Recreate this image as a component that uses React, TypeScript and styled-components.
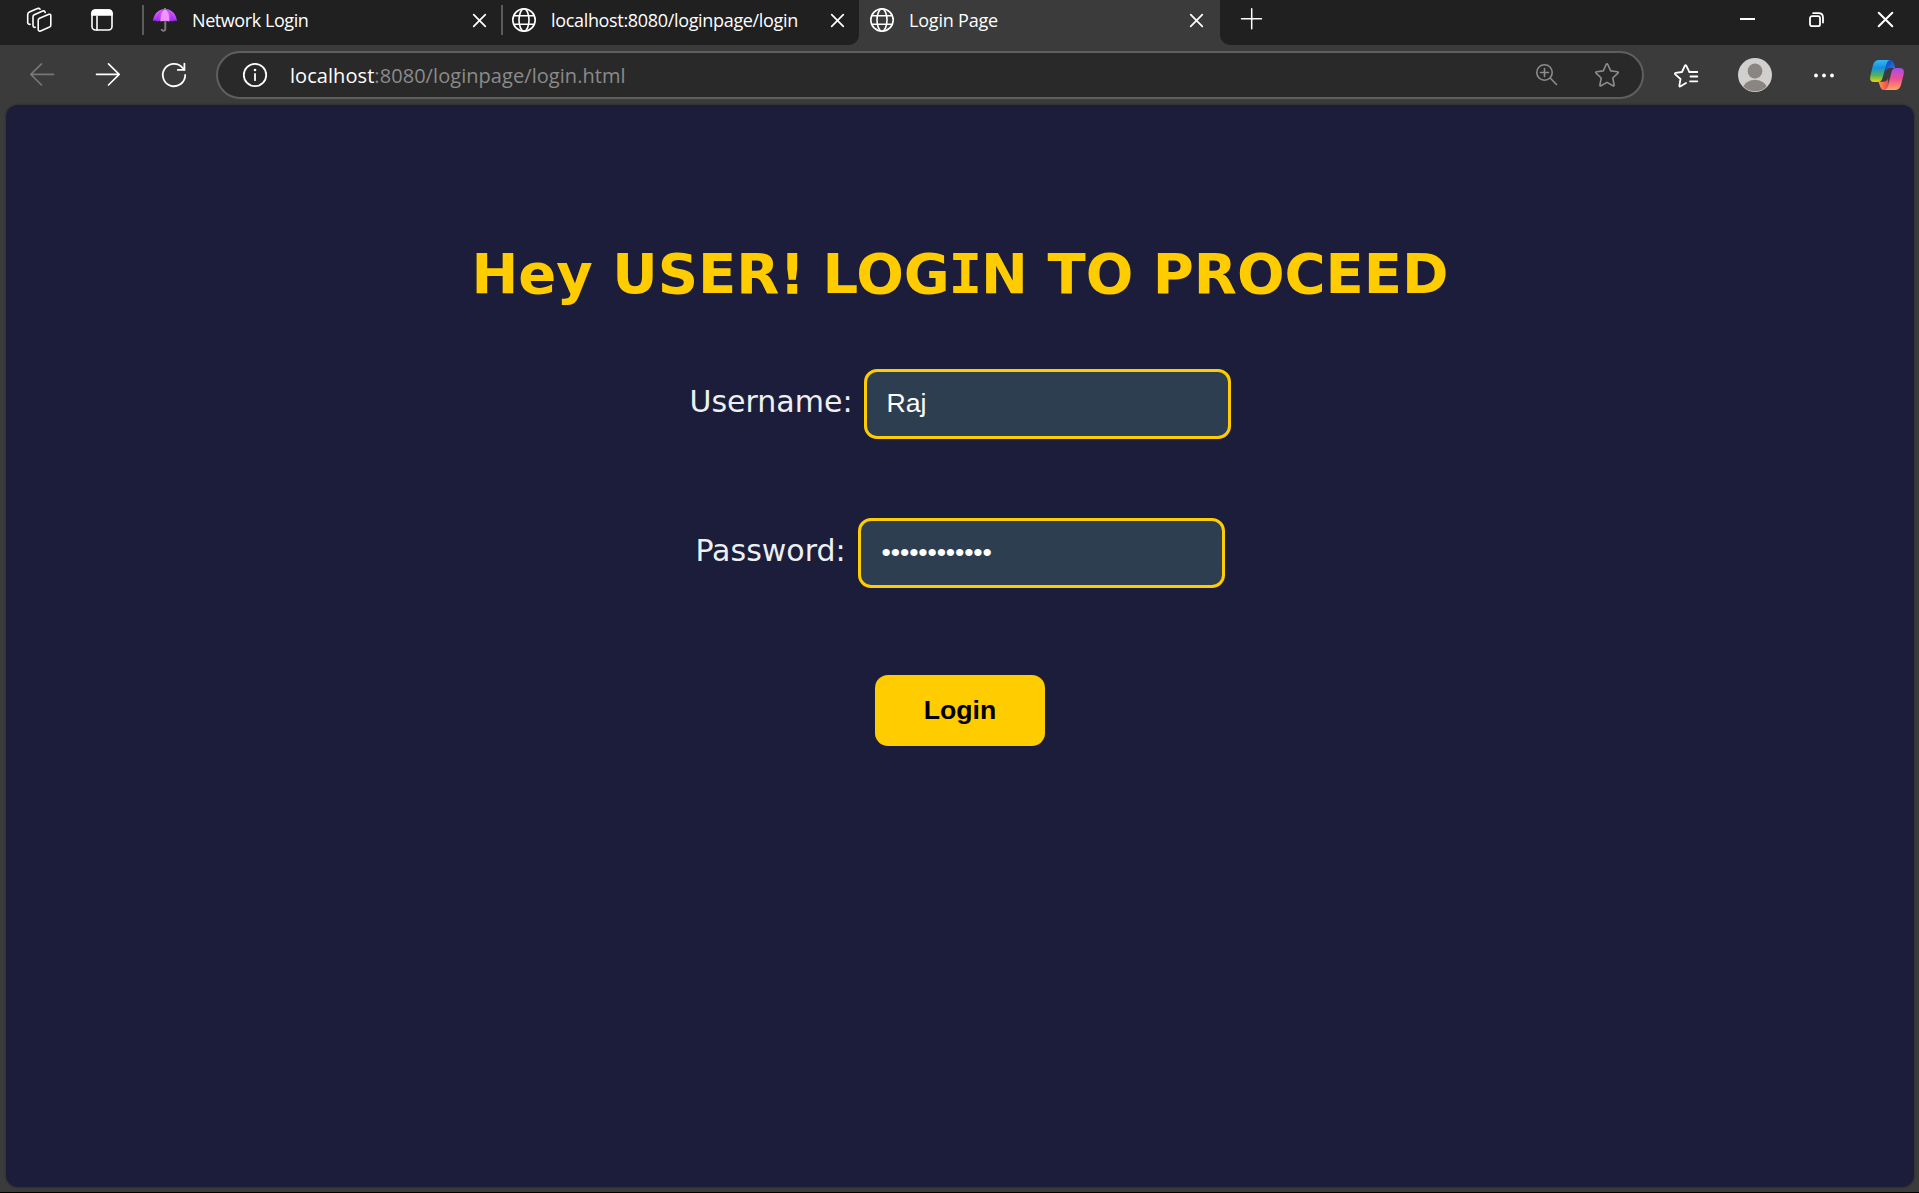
import React from "react";
import styled, { createGlobalStyle } from "styled-components";

const GlobalStyle = createGlobalStyle`
  *, *::before, *::after { box-sizing: border-box; }
  body { margin: 0; background: #000; overflow: hidden; }
`;

const chromeFont = `"Segoe UI", "Open Sans", "Noto Sans", sans-serif`;

const Window = styled.div`
  display: flex;
  flex-direction: column;
  width: 1919px;
  height: 1192px;
  background: #3b3b3b;
  font-family: ${chromeFont};
  color: #fff;
`;

const Svg = styled.svg`
  display: block;
  flex: none;
  overflow: visible;
`;

/* ---------- tab strip ---------- */

const TabStrip = styled.header`
  display: flex;
  height: 45px;
  flex: none;
`;

const StripLeft = styled.div`
  display: flex;
  width: 859px;
  padding-left: 27px;
  background: #202020;
  border-radius: 0 0 10px 0;
`;

const StripRight = styled.div`
  display: flex;
  flex: 1;
  justify-content: space-between;
  padding: 0 26px 0 21px;
  background: #202020;
  border-radius: 0 0 0 10px;
`;

const StripTools = styled.div`
  display: flex;
  gap: 40px;
  width: 115px;
  height: 40px;
  align-items: center;
`;

const Tab = styled.div<{ $width: number; $divided?: boolean; $inset?: number }>`
  display: flex;
  align-items: center;
  width: ${(p) => p.$width}px;
  height: 40px;
  padding-right: ${(p) => p.$inset ?? 15}px;
  &::before {
    content: "";
    width: 2px;
    height: 30px;
    margin-right: 9px;
    background: ${(p) => (p.$divided ? "#5c5c5c" : "transparent")};
  }
`;

const TabTitle = styled.span<{ $spacing: number }>`
  flex: 1;
  margin-left: 15px;
  padding-bottom: 1px;
  font-size: 18px;
  line-height: 24px;
  letter-spacing: ${(p) => p.$spacing}px;
  white-space: nowrap;
`;

const NewTab = styled.div`
  padding-top: 8px;
`;

const WindowControls = styled.div`
  display: flex;
  gap: 54px;
  padding-top: 12px;
`;

/* ---------- toolbar ---------- */

const Toolbar = styled.nav`
  display: flex;
  align-items: center;
  height: 60px;
  flex: none;
  padding-left: 30px;
`;

const NavButtons = styled.div`
  display: flex;
  gap: 42px;
  width: 186px;
`;

const AddressBar = styled.div`
  display: flex;
  align-items: center;
  width: 1428px;
  height: 48px;
  padding: 0 23px 0 25px;
  border: 2px solid #5f5f5f;
  border-radius: 24px;
  background: #292929;
`;

const Url = styled.div`
  flex: 1;
  margin-left: 23px;
  padding-top: 1px;
  font-size: 20px;
  line-height: 28px;
  letter-spacing: 0.06px;
  color: #8b8b8b;
`;

const Host = styled.span`
  color: #fff;
`;

const BarIcons = styled.div`
  display: flex;
  gap: 37px;
`;

const ToolIcons = styled.div`
  display: flex;
  align-items: center;
  padding-left: 30px;
`;

const ToolSlot = styled.div<{ $before?: number }>`
  margin-left: ${(p) => p.$before ?? 0}px;
`;

/* ---------- page ---------- */

const Page = styled.main`
  display: flex;
  flex-direction: column;
  align-items: center;
  width: 1908px;
  height: 1082px;
  margin-left: 6px;
  background: #1c1c3b;
  border-radius: 12px;
  box-shadow: 0 0 3px rgba(0, 0, 0, 0.4);
`;

const Title = styled.h1`
  margin: 134px 0 0;
  height: 130px;
  flex: none;
  font-family: Verdana, "DejaVu Sans", sans-serif;
  font-size: 56px;
  line-height: 70px;
  color: #ffcc00;
  white-space: nowrap;
`;

/* capital I with slab serifs, as in Verdana Bold */
const SlabI = styled.span`
  margin: 0 -1.2px;
  font-family: "DejaVu Sans Mono", monospace;
  line-height: 1;
`;

const Bang = styled.span`
  margin-right: -2px;
`;

const Field = styled.label<{ $gap: number }>`
  display: flex;
  flex: none;
  align-items: center;
  height: 70px;
  margin-bottom: ${(p) => p.$gap}px;
`;

const Caption = styled.span<{ $gap?: number }>`
  margin: 0 ${(p) => p.$gap ?? 11}px 5px 0;
  font-family: Verdana, "DejaVu Sans", sans-serif;
  font-size: 30px;
  line-height: 38px;
  color: #ecf0f1;
`;

const Input = styled.input`
  width: 367px;
  height: 70px;
  padding: 0 20px 2px;
  border: 3px solid #ffcc00;
  border-radius: 13px;
  outline: none;
  background: #2c3e50;
  color: #fff;
  font-family: Arial, "Liberation Sans", sans-serif;
  font-size: 26.67px;
  &[type="password"] {
    padding: 0 21px 1px;
    letter-spacing: -0.16px;
  }
`;

const Submit = styled.button`
  width: 170px;
  height: 71px;
  flex: none;
  padding: 0;
  border: 0;
  border-radius: 13px;
  background: #ffcc00;
  color: #000;
  font-family: Arial, "Liberation Sans", sans-serif;
  font-size: 26.67px;
  font-weight: bold;
`;

/* ---------- icons ---------- */

const line = {
  fill: "none",
  stroke: "#fff",
  strokeWidth: 1.6,
  strokeLinecap: "round" as const,
  strokeLinejoin: "round" as const,
};

const WorkspacesIcon = () => (
  <Svg width="24" height="24" {...line}>
    <path d="M12.5 10.3 22 6.3Q23.8 5.8 23.8 7.5V17.2Q23.8 18.5 22.6 19.1L13.6 23Q11.4 23.5 11.2 21.5V12.3Q11.2 11 12.5 10.3Z" />
    <path d="M8.2 19.3Q6.2 19.6 6 17.5V8.7Q6 7.3 7.3 6.7L15.7 3Q17.6 2.4 18.2 4.4" />
    <path d="M3.2 16.3Q.7 16.6.7 14.4V6.5Q.7 4.6 2.4 3.9L10.5.5Q12.4.1 13 1.2" />
  </Svg>
);

const TabActionsIcon = () => (
  <Svg width="22" height="22" {...line}>
    <rect x="1" y="1" width="20" height="20" rx="3.5" />
    <path d="M1 6V4.5Q1 1 4.5 1H17.5Q21 1 21 4.5V6Z" fill="#fff" />
    <path d="M6 7V21" />
  </Svg>
);

const UmbrellaIcon = () => (
  <Svg width="24" height="24">
    <defs>
      <linearGradient id="canopy" x1="0" x2="0" y1="0" y2="1">
        <stop offset="0" stopColor="#e070ff" />
        <stop offset="1" stopColor="#a424f0" />
      </linearGradient>
      <linearGradient id="panel" x1="0" x2="0" y1="0" y2="1">
        <stop offset="0" stopColor="#f3a0ff" />
        <stop offset="1" stopColor="#ed8cff" />
      </linearGradient>
    </defs>
    <path d="M12.3 12V21Q12.3 22.7 10.5 22.7T8.7 21" fill="none" stroke="#777" strokeWidth="2" />
    <path d="M12 1C5 1.5.7 6 0 13Q2.5 11.8 4.3 13.5Q8 12 12 14Q16 12 19.7 13.5Q21.5 11.8 24 13C23.3 6 19 1.5 12 1Z" fill="url(#canopy)" />
    <path d="M12 1C8.5 4 7.4 8 7.5 13.5Q12 11.8 16.5 13.5C16.6 8 15.5 4 12 1Z" fill="url(#panel)" />
    <path d="M12 1C8 2 4.5 6 4.3 13.3M12 1C16 2 19.5 6 19.7 13.3" fill="none" stroke="#8424d8" strokeWidth=".5" />
    <path d="M12 0V2" stroke="#888" strokeWidth="2" />
  </Svg>
);

const GlobeIcon = () => (
  <Svg width="24" height="24" {...line}>
    <circle cx="12" cy="12" r="11.2" />
    <ellipse cx="12" cy="12" rx="5" ry="11.2" />
    <path d="M2 7.8H22M2 16.2H22" />
  </Svg>
);

const CrossIcon = ({ size, weight = 1.7 }: { size: number; weight?: number }) => (
  <Svg width={size} height={size} {...line} strokeWidth={weight}>
    <path d={`M.7.7L${size - 0.7} ${size - 0.7}M${size - 0.7}.7L.7 ${size - 0.7}`} />
  </Svg>
);

const PlusIcon = () => (
  <Svg width="21" height="21" {...line} strokeWidth={1.5}>
    <path d="M.5 10.8H20.5M10.7.8V20.8" />
  </Svg>
);

const MinimizeIcon = () => (
  <Svg width="15" height="15" {...line} strokeWidth={2} strokeLinecap="butt">
    <path d="M0 7H15" />
  </Svg>
);

const RestoreIcon = () => (
  <Svg width="15" height="15" {...line} strokeWidth={1.8}>
    <rect x="1" y="4.2" width="10" height="10" rx="2" />
    <path d="M4.2 1.2H9.5Q14 1.2 14 5.7V10.5" />
  </Svg>
);

const ArrowIcon = ({ back }: { back?: boolean }) => (
  <Svg width="24" height="24" {...line} stroke={back ? "#777" : "#fff"}>
    <path d={back ? "M23.5 11.4H.8M11.5.9.8 11.4 11.5 22" : "M.5 11.4H23.2M12.5.9 23.2 11.4 12.5 22"} />
  </Svg>
);

const ReloadIcon = () => (
  <Svg width="24" height="24" {...line} strokeWidth={1.8}>
    <path d="M23.2 12A11.2 11.2 0 1 1 20.4 4.6L22.4 6.8" />
    <path d="M22.4.7V6.9H15.8" />
  </Svg>
);

const InfoIcon = () => (
  <Svg width="24" height="24" {...line} strokeWidth={1.8}>
    <circle cx="12" cy="12" r="11.2" />
    <path d="M12 11V17.2" />
    <circle cx="12" cy="7" r="1.3" fill="#fff" stroke="none" />
  </Svg>
);

const ZoomIcon = () => (
  <Svg width="22" height="24" {...line} stroke="#8c8c8c">
    <circle cx="8.5" cy="9.5" r="7.7" />
    <path d="M14.2 15 20.5 21.5M8.5 5.5V13.5M4.5 9.5H12.5" />
  </Svg>
);

const StarIcon = () => (
  <Svg width="24" height="24" {...line} stroke="#8c8c8c">
    <path d="M11.2 1.5Q12 .2 12.8 1.5L15.7 7.9 22.5 8.8Q23.9 9.1 22.9 10.2L17.8 15 19.1 22Q19.2 23.3 18 22.8L12 19.4 6 22.8Q4.8 23.3 4.9 22L6.2 15 1.1 10.2Q.1 9.1 1.5 8.8L8.3 7.9Z" />
  </Svg>
);

const FavoritesIcon = () => (
  <Svg width="24" height="24" {...line} strokeWidth={1.8}>
    <path d="M12 20 6.6 23.3Q5.2 24 5.4 22.4L6.5 16 1.3 11.3Q.3 10.2 1.8 9.9L8 9 10.8 2.9Q11.6 1.5 12.4 2.9L15.3 8.8" />
    <path d="M15.5 9H23.3M16.5 13.5H23.3M16 18.3H23.3" />
  </Svg>
);

const Avatar = () => (
  <Svg width="34" height="34">
    <defs>
      <clipPath id="avatarClip">
        <circle cx="17" cy="17" r="16.3" />
      </clipPath>
    </defs>
    <circle cx="17" cy="17" r="17" fill="#d2d0ce" />
    <g clipPath="url(#avatarClip)" fill="#8a8583">
      <circle cx="17" cy="13" r="7.4" />
      <ellipse cx="17" cy="31" rx="12" ry="9.3" />
    </g>
  </Svg>
);

const MoreIcon = () => (
  <Svg width="20" height="4" fill="#fff">
    <circle cx="2" cy="2.5" r="1.9" />
    <circle cx="10" cy="2.5" r="1.9" />
    <circle cx="18" cy="2.5" r="1.9" />
  </Svg>
);

const CopilotIcon = () => (
  <Svg width="34" height="30">
    <defs>
      <linearGradient id="cpLeft" x1="0" x2="0" y1="0" y2="1">
        <stop offset="0" stopColor="#35b8f5" />
        <stop offset=".35" stopColor="#1590e0" />
        <stop offset=".7" stopColor="#52b45c" />
        <stop offset="1" stopColor="#f2cf0c" />
      </linearGradient>
      <linearGradient id="cpRight" x1="0" x2="0" y1="0" y2="1">
        <stop offset="0" stopColor="#a64cf0" />
        <stop offset=".5" stopColor="#ee5090" />
        <stop offset="1" stopColor="#ffa65c" />
      </linearGradient>
      <linearGradient id="cpTop" x1="0" x2="1" y1="0" y2="1">
        <stop offset="0" stopColor="#1038b8" />
        <stop offset="1" stopColor="#2a86ee" />
      </linearGradient>
      <linearGradient id="cpBottom" x1="0" x2="1" y1="0" y2="0">
        <stop offset="0" stopColor="#ff9a45" />
        <stop offset="1" stopColor="#ee3c55" />
      </linearGradient>
    </defs>
    <path d="M15 0H19.5Q23 0 24 4L25.2 8H20Q17 8 16 11Z" fill="url(#cpTop)" />
    <path d="M19 30H14Q11 30 10 26L8.5 21.8H13.5Q17 21.8 18 18Z" fill="url(#cpBottom)" />
    <path d="M9 0H20Q17.5.5 16.5 4L12.5 18Q11.3 22 8 22H4Q-.8 22 .3 16L3 5Q4.5 0 9 0Z" fill="url(#cpLeft)" />
    <path d="M25 30H14.5Q17 29.5 18 26L21.5 12Q22.5 8 26 8H30Q34.8 8 33.7 14L31 25Q29.5 30 25 30Z" fill="url(#cpRight)" />
  </Svg>
);

export default function App() {
  return (
    <Window>
      <GlobalStyle />
      <TabStrip>
        <StripLeft>
          <StripTools>
            <WorkspacesIcon />
            <TabActionsIcon />
          </StripTools>
          <Tab $width={359} $divided>
            <UmbrellaIcon />
            <TabTitle $spacing={-0.42}>Network Login</TabTitle>
            <CrossIcon size={13} />
          </Tab>
          <Tab $width={358} $divided>
            <GlobeIcon />
            <TabTitle $spacing={-0.33}>localhost:8080/loginpage/login</TabTitle>
            <CrossIcon size={13} />
          </Tab>
        </StripLeft>
        <Tab $width={361} $inset={17}>
          <GlobeIcon />
          <TabTitle $spacing={-0.2}>Login Page</TabTitle>
          <CrossIcon size={13} />
        </Tab>
        <StripRight>
          <NewTab>
            <PlusIcon />
          </NewTab>
          <WindowControls>
            <MinimizeIcon />
            <RestoreIcon />
            <CrossIcon size={15} weight={2} />
          </WindowControls>
        </StripRight>
      </TabStrip>
      <Toolbar>
        <NavButtons>
          <ArrowIcon back />
          <ArrowIcon />
          <ReloadIcon />
        </NavButtons>
        <AddressBar>
          <InfoIcon />
          <Url>
            <Host>localhost</Host>:8080/loginpage/login.html
          </Url>
          <BarIcons>
            <ZoomIcon />
            <StarIcon />
          </BarIcons>
        </AddressBar>
        <ToolIcons>
          <ToolSlot>
            <FavoritesIcon />
          </ToolSlot>
          <ToolSlot $before={40}>
            <Avatar />
          </ToolSlot>
          <ToolSlot $before={42}>
            <MoreIcon />
          </ToolSlot>
          <ToolSlot $before={36}>
            <CopilotIcon />
          </ToolSlot>
        </ToolIcons>
      </Toolbar>
      <Page>
        <Title>
          Hey USER<Bang>!</Bang> LOG<SlabI>I</SlabI>N TO PROCEED
        </Title>
        <Field $gap={79}>
          <Caption>Username:</Caption>
          <Input type="text" defaultValue="Raj" />
        </Field>
        <Field $gap={87}>
          <Caption $gap={12}>Password:</Caption>
          <Input type="password" defaultValue="abcdefghijkl" />
        </Field>
        <Submit>Login</Submit>
      </Page>
    </Window>
  );
}
